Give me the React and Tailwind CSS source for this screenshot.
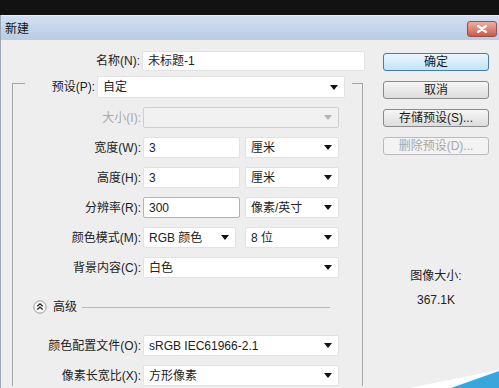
import React from 'react';

const font = "font-['Liberation_Sans','Noto_Sans_CJK_SC',sans-serif]";

const Arrow = ({ disabled }) => (
  <svg width="8" height="5" viewBox="0 0 8 5" className="shrink-0">
    <polygon points="0,0 8,0 4,5" fill={disabled ? '#b4b4b4' : '#111'} />
  </svg>
);

const Select = ({ value, width, disabled }) => (
  <div
    className={`flex items-center justify-between h-full pl-[5px] pr-[6px] rounded-[2px] border ${
      disabled ? 'bg-[#f1f1f1] border-[#cfcfcf]' : 'bg-white border-[#e2e2e2]'
    } ${width}`}
  >
    <span className="truncate">{value}</span>
    <Arrow disabled={disabled} />
  </div>
);

const Input = ({ value, width, focused }) => (
  <div
    className={`flex items-center h-full pl-[5px] rounded-[2px] border bg-white ${
      focused ? 'border-[#9bb8d8]' : 'border-[#e2e2e2]'
    } ${width}`}
  >
    {value}
  </div>
);

const Row = ({ label, disabled, children, className = '' }) => (
  <div className={`flex items-center h-[21px] ${className}`}>
    <span className={`w-[128px] text-right ${disabled ? 'text-[#a9a9a9]' : ''}`}>{label}</span>
    <div className="flex h-full ml-[2px]">{children}</div>
  </div>
);

const Button = ({ children, variant }) => {
  const styles = {
    primary: 'border-[#3c7fb1] bg-gradient-to-b from-[#eaf6fd] to-[#c4e4f7] text-[#1a1a1a]',
    normal: 'border-[#8a8a8a] bg-gradient-to-b from-[#f6f6f6] to-[#dcdcdc] text-[#1a1a1a]',
    disabled: 'border-[#b8bcbf] bg-[#f3f3f3] text-[#a8a8a8]'
  };
  return (
    <div className={`h-[18px] w-[106px] flex items-center justify-center rounded-[3px] border ${styles[variant]}`}>
      {children}
    </div>
  );
};

export default function App() {
  return (
    <div className={`relative w-[499px] h-[388px] overflow-hidden bg-[#121212] text-[12px] text-[#222] ${font}`}>
      <div className="h-[15px]" />
      <div className="border-l border-[#9aa7b6] h-[373px] flex flex-col">
        {/* Title bar */}
        <div className="h-[25px] flex items-center justify-between pl-[4px] pr-[2px] border-t border-[#e6eef8] bg-gradient-to-b from-[#d2dff0] to-[#b8cce5]">
          <span className="text-[#111] mt-[2px]">新建</span>
          <div className="w-[30px] h-[16px] mt-[2px] rounded-[3px] border border-[#a04a40] bg-gradient-to-b from-[#eab0a4] to-[#cc5a4a] flex items-center justify-center">
            <svg width="10" height="8" viewBox="0 0 10 8">
              <path d="M1 1 L9 7 M9 1 L1 7" stroke="#fff" strokeWidth="2.2" strokeLinecap="round" />
            </svg>
          </div>
        </div>

        {/* Body */}
        <div className="flex-1 bg-[#eeeeee] flex pt-[11px]">
          <div className="w-[370px]">
            <div className="flex items-center h-[20px]">
              <span className="w-[139px] text-right">名称(N):</span>
              <Input value="未标题-1" width="w-[223px] ml-[2px]" />
            </div>

            <fieldset className="ml-[11px] mt-[5px] w-[351px] border-t border-l border-r border-[#a6a6a6]">
              <legend className="ml-[12px] pr-[7px] h-[14px]">
                <div className="flex items-center h-[22px]">
                  <span className="w-[70px] text-right">预设(P):</span>
                  <div className="h-full ml-[2px]">
                    <Select value="自定" width="w-[248px]" />
                  </div>
                </div>
              </legend>

              <div className="flex flex-col gap-[9px] mt-[17px]">
                <Row label="大小(I):" disabled>
                  <Select value="" width="w-[196px]" disabled />
                </Row>
                <Row label="宽度(W):">
                  <Input value="3" width="w-[97px]" />
                  <Select value="厘米" width="w-[94px] ml-[5px]" />
                </Row>
                <Row label="高度(H):">
                  <Input value="3" width="w-[97px]" />
                  <Select value="厘米" width="w-[94px] ml-[5px]" />
                </Row>
                <Row label="分辨率(R):">
                  <Input value="300" width="w-[97px]" focused />
                  <Select value="像素/英寸" width="w-[94px] ml-[5px]" />
                </Row>
                <Row label="颜色模式(M):">
                  <Select value="RGB 颜色" width="w-[93px]" />
                  <Select value="8 位" width="w-[94px] ml-[9px]" />
                </Row>
                <Row label="背景内容(C):">
                  <Select value="白色" width="w-[196px]" />
                </Row>
              </div>

              <div className="flex items-center h-[20px] mt-[19px] pl-[20px] pr-[32px]">
                <svg width="14" height="14" viewBox="0 0 14 14" className="shrink-0">
                  <circle cx="7" cy="7" r="6.2" fill="#f7f7f7" stroke="#9a9a9a" strokeWidth="1" />
                  <path d="M4.3 6.2 L7 3.8 L9.7 6.2 M4.3 9.4 L7 7 L9.7 9.4" fill="none" stroke="#222" strokeWidth="1.3" />
                </svg>
                <span className="ml-[6px]">高级</span>
                <div className="flex-1 ml-[5px] h-[1px] bg-[#b8b8b8]" />
              </div>

              <div className="flex flex-col gap-[9px] mt-[18px]">
                <Row label="颜色配置文件(O):">
                  <Select value="sRGB IEC61966-2.1" width="w-[196px]" />
                </Row>
                <Row label="像素长宽比(X):">
                  <Select value="方形像素" width="w-[196px]" />
                </Row>
              </div>
            </fieldset>
          </div>

          {/* Right column */}
          <div className="ml-[12px] mt-[2px] flex flex-col">
            <div className="flex flex-col gap-[10px]">
              <Button variant="primary">确定</Button>
              <Button variant="normal">取消</Button>
              <Button variant="normal">存储预设(S)...</Button>
              <Button variant="disabled">删除预设(D)...</Button>
            </div>
            <div className="mt-[109px] w-[106px] text-center leading-[24px]">
              <div>图像大小:</div>
              <div>367.1K</div>
            </div>
          </div>
        </div>
      </div>

      {/* wallpaper corner peeking through */}
      <svg width="90" height="20" viewBox="0 0 90 20" className="absolute right-0 bottom-0">
        <polygon points="0,20 90,2 90,20" fill="#ffffff" />
        <polygon points="42,20 90,3 90,20" fill="#3aa6dc" />
      </svg>
    </div>
  );
}
